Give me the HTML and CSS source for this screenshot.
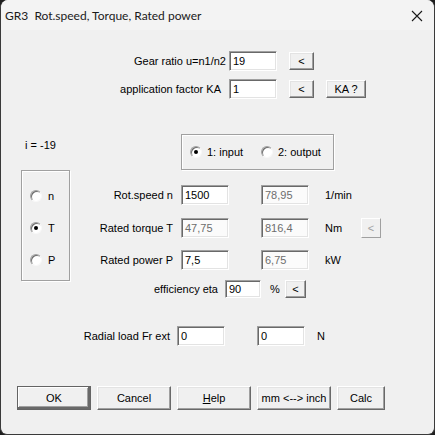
FILE: index.html
```html
<!DOCTYPE html>
<html>
<head>
<meta charset="utf-8">
<link rel="stylesheet" href="styles.css">
</head>
<body>
<div class="window">
  <div class="titlebar">
    <span class="title">GR3&nbsp;&nbsp;Rot.speed, Torque, Rated power</span>
    <svg class="close" width="12" height="12" viewBox="0 0 12 12"><path d="M1 1L11 11M11 1L1 11" stroke="#1a1a1a" stroke-width="1.1" fill="none"/></svg>
  </div>
  <div class="client">
    <div class="row r1">
      <span class="lbl w226">Gear ratio u=n1/n2</span>
      <span class="edit w48">19</span>
      <span class="btn small ml12">&lt;</span>
    </div>
    <div class="row r2">
      <span class="lbl w221">application factor KA</span>
      <span class="edit w48 ml8">1</span>
      <span class="btn small ml12">&lt;</span>
      <span class="btn ka">KA ?</span>
    </div>

    <div class="mid">
      <span class="ival">i = -19</span>
      <div class="group io">
        <span class="radio on"></span><span class="rtxt first">1: input</span>
        <span class="radio"></span><span class="rtxt">2: output</span>
      </div>
    </div>

    <div class="calc">
      <div class="group sel">
        <div class="selrow"><span class="radio"></span><span class="rtxt">n</span></div>
        <div class="selrow"><span class="radio on"></span><span class="rtxt">T</span></div>
        <div class="selrow"><span class="radio"></span><span class="rtxt">P</span></div>
      </div>
      <div class="vals">
        <div class="vrow">
          <span class="lbl vl">Rot.speed n</span>
          <span class="edit w48">1500</span>
          <span class="edit w48 dis ml32">78,95</span>
          <span class="unit">1/min</span>
        </div>
        <div class="vrow">
          <span class="lbl vl">Rated torque T</span>
          <span class="edit w48 dis">47,75</span>
          <span class="edit w48 dis ml32">816,4</span>
          <span class="unit">Nm</span>
          <span class="btn tiny disbtn">&lt;</span>
        </div>
        <div class="vrow">
          <span class="lbl vl">Rated power P</span>
          <span class="edit w48">7,5</span>
          <span class="edit w48 dis ml32">6,75</span>
          <span class="unit">kW</span>
        </div>
      </div>
    </div>

    <div class="row eta">
      <span class="lbl w218">efficiency eta</span>
      <span class="edit w36 ml7">90</span>
      <span class="pct">%</span>
      <span class="btn tiny">&lt;</span>
    </div>

    <div class="row radial">
      <span class="lbl w170">Radial load Fr ext</span>
      <span class="edit w48 ml7">0</span>
      <span class="edit w48 ml32">0</span>
      <span class="unit n">N</span>
    </div>

    <div class="buttons">
      <span class="btn big def">OK</span>
      <span class="btn big"><span>Cancel</span></span>
      <span class="btn big"><span><u>H</u>elp</span></span>
      <span class="btn big">mm &lt;--&gt; inch</span>
      <span class="btn calcb">Calc</span>
    </div>
  </div>
</div>
</body>
</html>
```

FILE: styles.css
```css
html, body {
  margin: 0;
  padding: 0;
  background: #1e1e1e;
}
.window {
  box-sizing: border-box;
  width: 435px;
  height: 435px;
  background: #f0f0f0;
  border: 1px solid #3a3a3a;
  border-top: none;
  border-radius: 8px 8px 7px 7px;
  overflow: hidden;
  font-family: "Liberation Sans", Arial, sans-serif;
  font-size: 11px;
  color: #000;
}
.titlebar {
  height: 30px;
  background: #f3f3f3;
  display: flex;
  align-items: center;
  justify-content: space-between;
  padding: 0 11px 0 4px;
}
.title {
  font-family: "Lato", "Liberation Sans", sans-serif;
  font-size: 12px;
  color: #1a1a1a;
}
.close { margin-top: 1px; }
.client {
  height: 405px;
  margin-left: -1px;
}
.row {
  display: flex;
  align-items: center;
}
.lbl {
  text-align: right;
  white-space: nowrap;
  box-sizing: border-box;
}
.w226 { width: 226px; margin-right: 3px; }
.w221 { width: 221px; }
.w218 { width: 218px; }
.w170 { width: 170px; }
.ml7 { margin-left: 7px; }
.ml8 { margin-left: 8px; }
.ml12 { margin-left: 12px; }
.ml32 { margin-left: 32px; }

.edit {
  box-sizing: border-box;
  height: 20px;
  background: #fff;
  border: 1px solid;
  border-color: #a0a0a0 #fff #fff #a0a0a0;
  box-shadow: inset 1px 1px #696969, inset -1px -1px #e3e3e3;
  padding: 0 0 0 3px;
  line-height: 18px;
  white-space: nowrap;
}
.edit.dis { color: #6d6d6d; background: #fbfbfb; }
.w48 { width: 48px; }
.w36 { width: 36px; }

.btn {
  box-sizing: border-box;
  display: flex;
  align-items: center;
  justify-content: center;
  background: #f0f0f0;
  border: 1px solid;
  border-color: #fff #696969 #696969 #fff;
  box-shadow: inset -1px -1px #a0a0a0, inset 1px 1px #e3e3e3;
  white-space: nowrap;
}
.small { width: 25px; height: 18px; }
.ka { width: 40px; height: 18px; margin-left: 12px; }
.tiny { width: 21px; height: 18px; }

.r1 { margin-top: 21px; height: 20px; }
.r2 { margin-top: 8px; height: 20px; }

.mid {
  display: flex;
  margin-top: 35px;
  height: 36px;
}
.ival {
  margin-left: 25px;
  width: 156px;
  line-height: 11px;
  margin-top: 6px;
}
.group {
  box-sizing: border-box;
  border: 1px solid #a0a0a0;
  box-shadow: 1px 1px #fff, inset 1px 1px #fff;
}
.io {
  width: 153px;
  height: 36px;
  display: flex;
  align-items: center;
  padding-left: 8px;
  white-space: nowrap;
}
.radio {
  box-sizing: border-box;
  width: 12px;
  height: 12px;
  border-radius: 50%;
  background: #fff;
  border: 1px solid;
  border-color: #a0a0a0 #f8f8f8 #f8f8f8 #a0a0a0;
  box-shadow: inset 1px 1px #6d6d6d;
  position: relative;
  flex: none;
}
.radio.on::after {
  content: "";
  position: absolute;
  left: 3px;
  top: 3px;
  width: 4px;
  height: 4px;
  border-radius: 50%;
  background: #000;
}
.rtxt { margin-left: 5px; white-space: nowrap; }
.rtxt.first { width: 54px; }

.calc {
  display: flex;
}
.sel {
  margin-left: 21px;
  width: 49px;
  height: 111px;
  display: flex;
  flex-direction: column;
  justify-content: space-between;
  padding: 19px 0 14px 8px;
}
.sel .rtxt { margin-left: 6px; }
.selrow {
  display: flex;
  align-items: center;
  height: 12px;
}
.vals {
  margin-top: 15px;
  display: flex;
  flex-direction: column;
  gap: 12px;
}
.vrow {
  display: flex;
  align-items: center;
  height: 20.5px;
}
.vl { width: 103px; margin-right: 8px; }
.unit { margin-left: 16px; width: 36px; }
.disbtn { color: #a0a0a0; border-color: #fff #a0a0a0 #a0a0a0 #fff; box-shadow: inset 1px 1px #f0f0f0; height: 20px; width: 20px; }

.eta { margin-top: -1px; height: 18px; }
.eta .edit { height: 18px; line-height: 16px; }
.pct { margin-left: 9px; width: 15px; }

.radial { margin-top: 28px; height: 20px; }
.unit.n { margin-left: 12px; }

.buttons {
  display: flex;
  gap: 6px;
  margin-top: 40px;
  padding-left: 17px;
}
.big { width: 74px; height: 24px; }
.calcb { width: 48px; height: 24px; }
.def {
  border-color: #fff #404040 #404040 #fff;
  outline: 1px solid #646464;
  outline-offset: -1px;
  box-shadow: inset -2px -2px #696969, inset 1px 1px #fff, inset -3px -3px #a0a0a0;
}
```
